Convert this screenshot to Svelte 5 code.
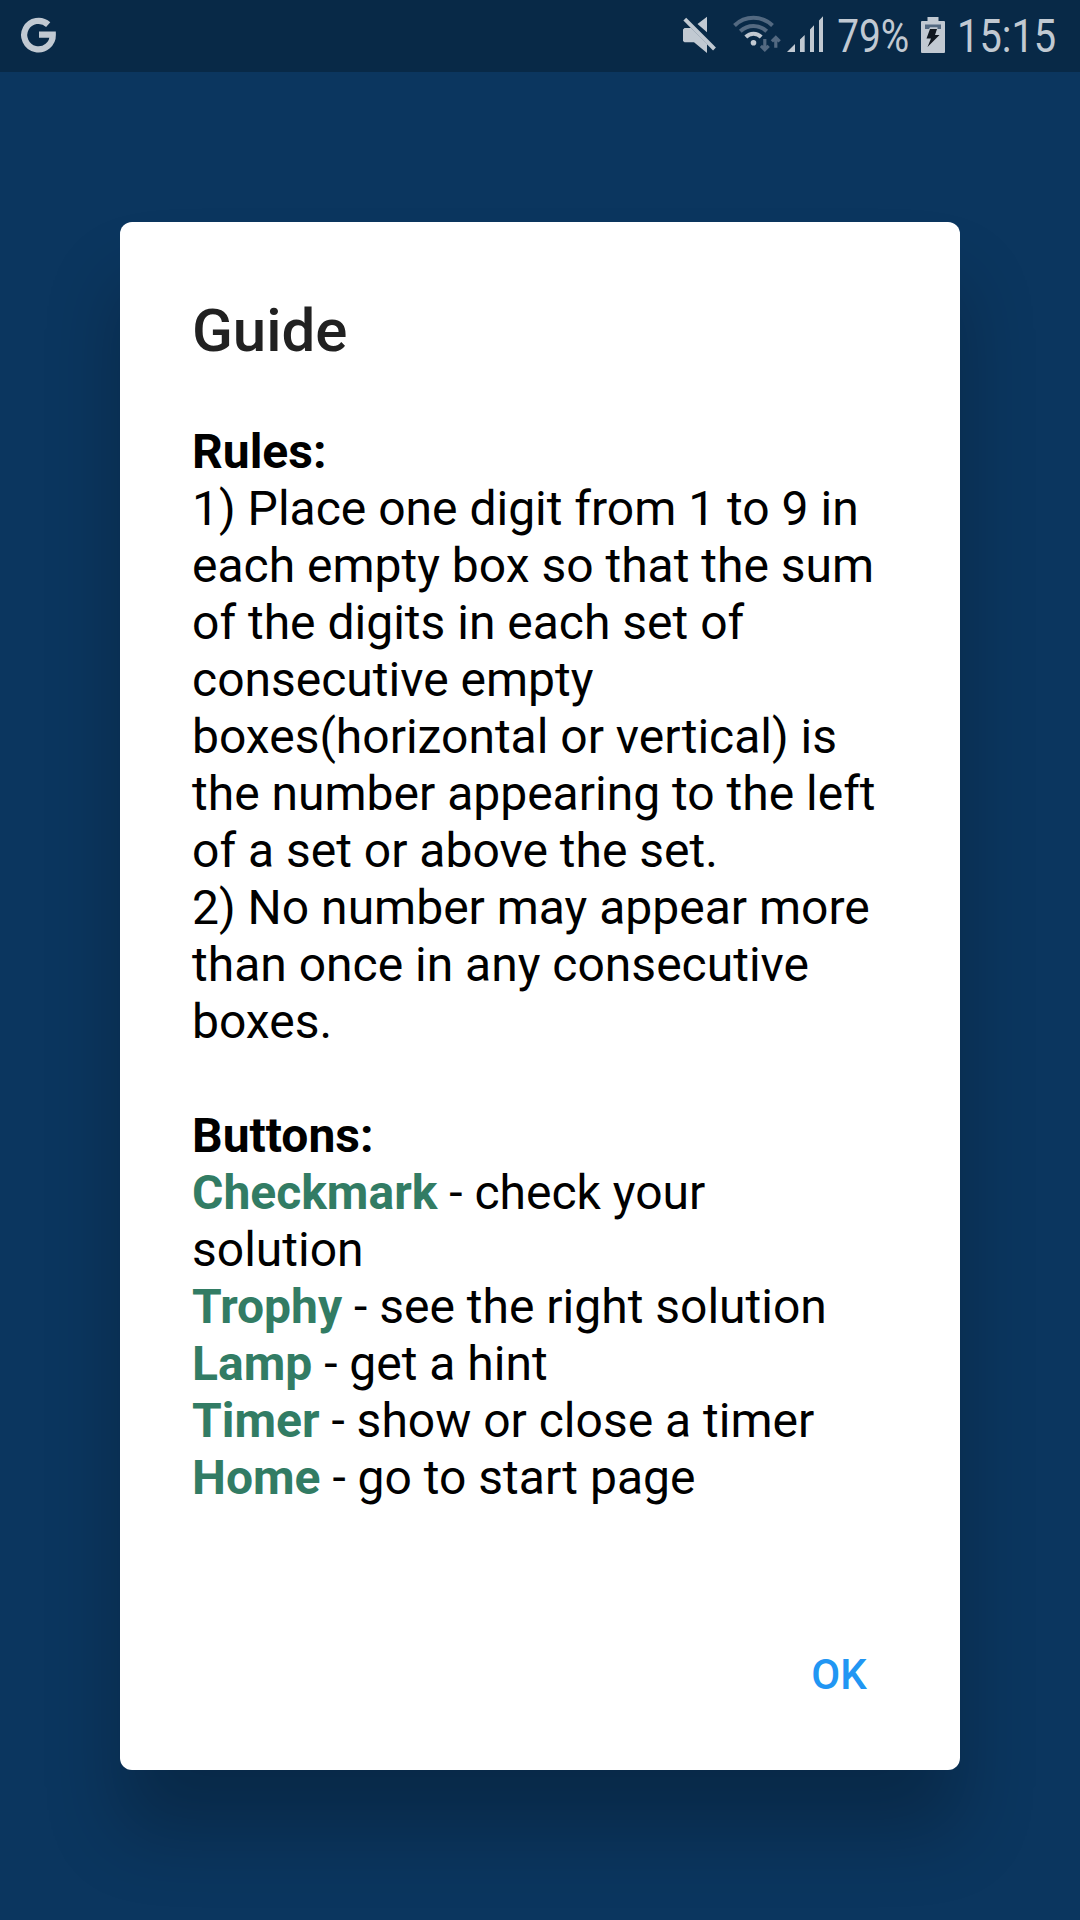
<script>
  const buttons = [
    { name: 'Checkmark', text: 'check your solution' },
    { name: 'Trophy', text: 'see the right solution' },
    { name: 'Lamp', text: 'get a hint' },
    { name: 'Timer', text: 'show or close a timer' },
    { name: 'Home', text: 'go to start page' }
  ];
</script>

<div class="screen">
  <header class="status">
    <svg class="status-art" width="1080" height="72" viewBox="0 0 1080 72">
      <!-- Google notification -->
      <path d="M48.2 24.6A14.3 14.3 0 1 0 52.8 34.7H39" fill="none" stroke="#c1c9d2" stroke-width="6.2" />
      <!-- muted speaker -->
      <path d="M697.5 24 707 16.8V32.3ZM683 29.5 684.5 28H691L707 44V53L694 42.3H684.5L683 41Z" fill="#c1c9d2" />
      <path d="M684.8 19.2 714.5 49" stroke="#c1c9d2" stroke-width="4" />
      <!-- wifi with traffic arrows -->
      <g fill="none" stroke="#536981" stroke-width="4">
        <path d="M734.5 25.5A27.2 27.2 0 0 1 772.5 25.5" />
        <path d="M740.3 31.3A19.3 19.3 0 0 1 766.7 31.3" />
      </g>
      <path d="M745.8 37A10.8 10.8 0 0 1 761.2 37" fill="none" stroke="#c1c9d2" stroke-width="4" />
      <circle cx="753.5" cy="42.7" r="2.8" fill="#c1c9d2" />
      <g fill="none" stroke="#536981" stroke-width="3.2">
        <path d="M764.8 39V50M760.9 45.8 764.8 49.7 768.7 45.8" />
        <path d="M775.8 47.7V37.5M771.9 41.4 775.8 37.5 779.7 41.4" />
      </g>
      <!-- mobile signal -->
      <path d="M787 52 795 44V52ZM800 39.5 804.7 35V52H800ZM810 29.5 814 25.2V52H810ZM819 20.5 823 16.2V52H819Z" fill="#c1c9d2" />
      <text x="837.2" y="52.2" textLength="72" lengthAdjust="spacingAndGlyphs">79%</text>
      <!-- charging battery -->
      <path d="M927.5 17H938.5V21H944Q945 21 945 22V52Q945 53 944 53H922Q921 53 921 52V22Q921 21 922 21H927.5Z" fill="#c1c9d2" />
      <path d="M925 24.4H941V29H937.5V27.3H930L929 29H925Z" fill="#536981" />
      <path d="M930 29H937L935 35H939.5L927.5 47L931 38.5H926.5Z" fill="#10171f" />
      <text x="957" y="52.2" textLength="99.2" lengthAdjust="spacingAndGlyphs">15:15</text>
    </svg>
  </header>

  <main>
    <section class="dialog" role="dialog" aria-labelledby="title">
      <h1 id="title">Guide</h1>
      <div class="content">
        <h2>Rules:</h2>
        <p>1) Place one digit from 1 to 9 in each empty box so that the sum of the digits in each set of consecutive empty boxes(horizontal or vertical) is the number appearing to the left of a set or above the set.</p>
        <p>2) No number may appear more than once in any consecutive boxes.</p>
        <h2 class="next">Buttons:</h2>
        {#each buttons as b}
          <p><b>{b.name}</b> - {b.text}</p>
        {/each}
      </div>
      <div class="actions"><button>OK</button></div>
    </section>
  </main>
</div>

<style>
  :global(body) {
    margin: 0;
    background: #0b365f;
  }
  .screen {
    height: 1920px;
    display: flex;
    flex-direction: column;
    overflow: hidden;
    background: #0b365f;
    font-family: Roboto, sans-serif;
  }
  .status {
    height: 72px;
    flex: none;
    background: #082947;
  }
  .status-art {
    display: block;
  }
  .status-art text {
    font: 400 45.5px Roboto, sans-serif;
    fill: #c1c9d2;
  }
  main {
    flex: 1;
    display: flex;
    align-items: center;
    justify-content: center;
  }
  .dialog {
    width: 840px;
    height: 1548px;
    box-sizing: border-box;
    padding: 73px 72px 0;
    display: flex;
    flex-direction: column;
    background: #fff;
    border-radius: 12px;
    box-shadow: 0 62px 76px rgba(0, 0, 0, 0.24);
  }
  h1 {
    margin: 0;
    font-size: 60px;
    line-height: 72px;
    font-weight: 500;
    color: #212121;
  }
  .content {
    margin-top: 56px;
    font-size: 48px;
    line-height: 57px;
    color: #000;
  }
  h2,
  p {
    margin: 0;
    font-size: inherit;
  }
  h2 {
    font-weight: 700;
  }
  .next {
    margin-top: 57px;
  }
  b {
    font-weight: 700;
    color: #327c64;
  }
  .actions {
    margin-top: auto;
    height: 150px;
    margin-right: -47px;
    display: flex;
    justify-content: flex-end;
    align-items: flex-start;
  }
  button {
    height: 108px;
    width: 192px;
    padding: 0;
    border: 0;
    background: none;
    font: 500 42px Roboto, sans-serif;
    color: #2196f3;
  }
</style>
